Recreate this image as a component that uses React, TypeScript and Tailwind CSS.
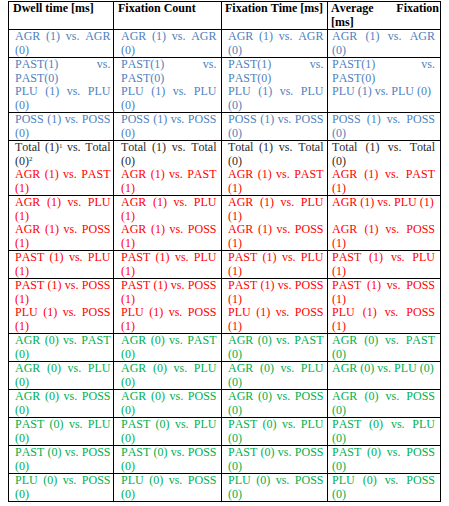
import React from 'react';

type Para = { text: React.ReactNode; color: string; tall?: boolean };

const BLUE = 'text-[#4f81bd]';
const RED = 'text-[#ff0000]';
const GREEN = 'text-[#00b050]';
const DARK = 'text-[#2b2b2b]';

const headers = ['Dwell time [ms]', 'Fixation Count', 'Fixation Time [ms]', 'Average Fixation [ms]'];

// per-column cell padding, the source document indents each column a little differently
const bodyPad = ['pl-[6px] pr-[2.5px]', 'pl-[7px] pr-[4.5px]', 'pl-[6px] pr-[3.5px]', 'pl-[4px] pr-[5px]'];
const headPad = ['pl-[4px] pr-[4px]', 'pl-[4px] pr-[4px]', 'pl-[3px] pr-[2px]', 'pl-[3px] pr-[1px]'];

const p = (text: React.ReactNode, color: string, tall?: boolean): Para => ({ text, color, tall });

const rows: Para[][][] = [
  [0, 1, 2, 3].map(() => [p('AGR (1) vs. AGR (0)', BLUE)]),
  [0, 1, 2, 3].map(() => [p('PAST(1) vs. PAST(0)', BLUE), p('PLU (1) vs. PLU (0)', BLUE)]),
  [0, 1, 2, 3].map(() => [p('POSS (1) vs. POSS (0)', BLUE)]),
  [0, 1, 2, 3].map((c) => [
    p(
      c === 0 ? (
        <>
          Total (1)<sup className="text-[7px] leading-none">1</sup> vs. Total (0)
          <sup className="text-[7px] leading-none">2</sup>
        </>
      ) : (
        'Total (1) vs. Total (0)'
      ),
      DARK,
    ),
    p('AGR (1) vs. PAST (1)', RED),
  ]),
  [0, 1, 2, 3].map((c) => [p('AGR (1) vs. PLU (1)', RED, c === 3), p('AGR (1) vs. POSS (1)', RED)]),
  [0, 1, 2, 3].map(() => [p('PAST (1) vs. PLU (1)', RED)]),
  [0, 1, 2, 3].map(() => [p('PAST (1) vs. POSS (1)', RED), p('PLU (1) vs. POSS (1)', RED)]),
  [0, 1, 2, 3].map(() => [p('AGR (0) vs. PAST (0)', GREEN)]),
  [0, 1, 2, 3].map(() => [p('AGR (0) vs. PLU (0)', GREEN)]),
  [0, 1, 2, 3].map(() => [p('AGR (0) vs. POSS (0)', GREEN)]),
  [0, 1, 2, 3].map(() => [p('PAST (0) vs. PLU (0)', GREEN)]),
  [0, 1, 2, 3].map(() => [p('PAST (0) vs. POSS (0)', GREEN)]),
  [0, 1, 2, 3].map(() => [p('PLU (0) vs. POSS (0)', GREEN)]),
];

export default function App() {
  return (
    <div className="w-[449px] h-[506px] bg-white overflow-hidden pt-[1px] pl-[8px] font-['Liberation_Serif','Times_New_Roman',serif] text-[12px] leading-[13.5px] [font-kerning:none]">
      <table className="w-[432px] table-fixed border-collapse font-['Liberation_Serif','Times_New_Roman',serif]">
        <colgroup>
          <col className="w-[105px]" />
          <col className="w-[108px]" />
          <col className="w-[106px]" />
          <col className="w-[113px]" />
        </colgroup>
        <thead>
          <tr>
            {headers.map((h, i) => (
              <th
                key={h}
                className={`border border-black align-top py-0 h-[27px] text-justify font-bold text-black ${headPad[i]}`}
              >
                {h}
              </th>
            ))}
          </tr>
        </thead>
        <tbody>
          {rows.map((row, r) => (
            <tr key={r}>
              {row.map((paras, c) => (
                <td key={c} className={`border border-black align-top py-0 ${bodyPad[c]}`}>
                  {paras.map((para, k) => (
                    <div key={k} className={`text-justify ${para.color} ${para.tall ? 'min-h-[27px]' : ''}`}>
                      {para.text}
                    </div>
                  ))}
                </td>
              ))}
            </tr>
          ))}
        </tbody>
      </table>
    </div>
  );
}
